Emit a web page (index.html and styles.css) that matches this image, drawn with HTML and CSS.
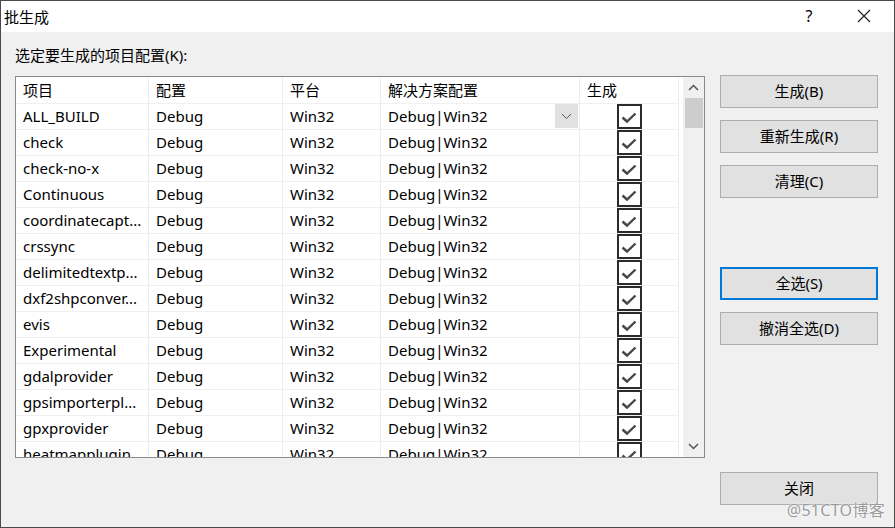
FILE: index.html
```html
<!DOCTYPE html>
<html lang="zh-CN">
<head>
<meta charset="utf-8">
<title>批生成</title>
<link rel="stylesheet" href="styles.css">
</head>
<body>
<div class="window">
  <div class="titlebar">
    <span class="title">批生成</span>
    <span class="tb-help">?</span>
    <span class="tb-close"><svg width="14" height="14" viewBox="0 0 14 14"><path d="M1 1 L13 13 M13 1 L1 13" stroke="#222" stroke-width="1.2" fill="none"/></svg></span>
  </div>
  <div class="main">
    <div class="left">
      <div class="label">选定要生成的项目配置(K):</div>
      <div class="listbox">
        <div class="grid">
          <div class="hdr">项目</div><div class="hdr">配置</div><div class="hdr">平台</div><div class="hdr">解决方案配置</div><div class="hdr">生成</div>

          <div class="c c1">ALL_BUILD</div><div class="c">Debug</div><div class="c">Win32</div><div class="c sol">Debug|Win32<span class="dd"><svg width="11" height="7" viewBox="0 0 11 7"><path d="M1 1 L5.5 5.5 L10 1" stroke="#555" stroke-width="1" fill="none"/></svg></span></div><div class="c chk"><span class="box"><svg width="20" height="20" viewBox="0 0 20 20"><path d="M3.5 10.5 L8 14.5 L16.5 6.5" stroke="#474747" stroke-width="2.4" fill="none"/></svg></span></div>

          <div class="c c1">check</div><div class="c">Debug</div><div class="c">Win32</div><div class="c">Debug|Win32</div><div class="c chk"><span class="box"><svg width="20" height="20" viewBox="0 0 20 20"><path d="M3.5 10.5 L8 14.5 L16.5 6.5" stroke="#474747" stroke-width="2.4" fill="none"/></svg></span></div>

          <div class="c c1">check-no-x</div><div class="c">Debug</div><div class="c">Win32</div><div class="c">Debug|Win32</div><div class="c chk"><span class="box"><svg width="20" height="20" viewBox="0 0 20 20"><path d="M3.5 10.5 L8 14.5 L16.5 6.5" stroke="#474747" stroke-width="2.4" fill="none"/></svg></span></div>

          <div class="c c1">Continuous</div><div class="c">Debug</div><div class="c">Win32</div><div class="c">Debug|Win32</div><div class="c chk"><span class="box"><svg width="20" height="20" viewBox="0 0 20 20"><path d="M3.5 10.5 L8 14.5 L16.5 6.5" stroke="#474747" stroke-width="2.4" fill="none"/></svg></span></div>

          <div class="c c1">coordinatecapt...</div><div class="c">Debug</div><div class="c">Win32</div><div class="c">Debug|Win32</div><div class="c chk"><span class="box"><svg width="20" height="20" viewBox="0 0 20 20"><path d="M3.5 10.5 L8 14.5 L16.5 6.5" stroke="#474747" stroke-width="2.4" fill="none"/></svg></span></div>

          <div class="c c1">crssync</div><div class="c">Debug</div><div class="c">Win32</div><div class="c">Debug|Win32</div><div class="c chk"><span class="box"><svg width="20" height="20" viewBox="0 0 20 20"><path d="M3.5 10.5 L8 14.5 L16.5 6.5" stroke="#474747" stroke-width="2.4" fill="none"/></svg></span></div>

          <div class="c c1">delimitedtextp...</div><div class="c">Debug</div><div class="c">Win32</div><div class="c">Debug|Win32</div><div class="c chk"><span class="box"><svg width="20" height="20" viewBox="0 0 20 20"><path d="M3.5 10.5 L8 14.5 L16.5 6.5" stroke="#474747" stroke-width="2.4" fill="none"/></svg></span></div>

          <div class="c c1">dxf2shpconver...</div><div class="c">Debug</div><div class="c">Win32</div><div class="c">Debug|Win32</div><div class="c chk"><span class="box"><svg width="20" height="20" viewBox="0 0 20 20"><path d="M3.5 10.5 L8 14.5 L16.5 6.5" stroke="#474747" stroke-width="2.4" fill="none"/></svg></span></div>

          <div class="c c1">evis</div><div class="c">Debug</div><div class="c">Win32</div><div class="c">Debug|Win32</div><div class="c chk"><span class="box"><svg width="20" height="20" viewBox="0 0 20 20"><path d="M3.5 10.5 L8 14.5 L16.5 6.5" stroke="#474747" stroke-width="2.4" fill="none"/></svg></span></div>

          <div class="c c1">Experimental</div><div class="c">Debug</div><div class="c">Win32</div><div class="c">Debug|Win32</div><div class="c chk"><span class="box"><svg width="20" height="20" viewBox="0 0 20 20"><path d="M3.5 10.5 L8 14.5 L16.5 6.5" stroke="#474747" stroke-width="2.4" fill="none"/></svg></span></div>

          <div class="c c1">gdalprovider</div><div class="c">Debug</div><div class="c">Win32</div><div class="c">Debug|Win32</div><div class="c chk"><span class="box"><svg width="20" height="20" viewBox="0 0 20 20"><path d="M3.5 10.5 L8 14.5 L16.5 6.5" stroke="#474747" stroke-width="2.4" fill="none"/></svg></span></div>

          <div class="c c1">gpsimporterpl...</div><div class="c">Debug</div><div class="c">Win32</div><div class="c">Debug|Win32</div><div class="c chk"><span class="box"><svg width="20" height="20" viewBox="0 0 20 20"><path d="M3.5 10.5 L8 14.5 L16.5 6.5" stroke="#474747" stroke-width="2.4" fill="none"/></svg></span></div>

          <div class="c c1">gpxprovider</div><div class="c">Debug</div><div class="c">Win32</div><div class="c">Debug|Win32</div><div class="c chk"><span class="box"><svg width="20" height="20" viewBox="0 0 20 20"><path d="M3.5 10.5 L8 14.5 L16.5 6.5" stroke="#474747" stroke-width="2.4" fill="none"/></svg></span></div>

          <div class="c c1">heatmapplugin</div><div class="c">Debug</div><div class="c">Win32</div><div class="c">Debug|Win32</div><div class="c chk"><span class="box"><svg width="20" height="20" viewBox="0 0 20 20"><path d="M3.5 10.5 L8 14.5 L16.5 6.5" stroke="#474747" stroke-width="2.4" fill="none"/></svg></span></div>
        </div>
        <div class="scrollbar">
          <span class="arrow"><svg width="11" height="7" viewBox="0 0 11 7"><path d="M1 6 L5.5 1.5 L10 6" stroke="#555" stroke-width="1.5" fill="none"/></svg></span>
          <span class="thumb"></span>
          <span class="track"></span>
          <span class="arrow"><svg width="11" height="7" viewBox="0 0 11 7"><path d="M1 1 L5.5 5.5 L10 1" stroke="#555" stroke-width="1.5" fill="none"/></svg></span>
        </div>
      </div>
    </div>
    <div class="buttons">
      <div class="btn">生成(B)</div>
      <div class="btn">重新生成(R)</div>
      <div class="btn">清理(C)</div>
      <div class="btn focus sep1">全选(S)</div>
      <div class="btn">撤消全选(D)</div>
      <div class="btn sep2">关闭</div>
    </div>
  </div>
  <div class="watermark">@51CTO博客</div>
</div>
</body>
</html>
```

FILE: styles.css
```css
* { box-sizing: border-box; }
html, body { margin: 0; padding: 0; }
body {
  font-family: "Noto Sans", "Noto Sans CJK SC", sans-serif;
  font-size: 15px;
  color: #000;
  background: #f0f0f0;
}
.window {
  position: relative;
  width: 895px;
  height: 528px;
  border: 1px solid #4a4a4a;
  background: #f0f0f0;
  display: flex;
  flex-direction: column;
  overflow: hidden;
}
.titlebar {
  height: 31px;
  background: #fff;
  display: flex;
  align-items: center;
  padding-left: 3px;
  padding-bottom: 1px;
  flex-shrink: 0;
}
.title { flex: 1; font-size: 15px; }
.tb-help { width: 20px; font-size: 16px; margin-right: 38px; text-align: center; }
.tb-close { width: 14px; height: 14px; margin-right: 23px; display: flex; }
.main {
  display: flex;
  padding: 13px 0 0 14px;
  flex: 1;
}
.left { width: 690px; display: flex; flex-direction: column; }
.label { height: 20px; line-height: 20px; margin-bottom: 11px; }
.listbox {
  height: 382px;
  border: 1px solid #8a8a8a;
  background: #fff;
  display: flex;
  overflow: hidden;
}
.grid {
  display: grid;
  grid-template-columns: 133px 134px 98px 199px 99px;
  grid-auto-rows: 26px;
  width: 667px;
  align-content: start;
}
.hdr, .c {
  padding-left: 7px;
  line-height: 26px;
  white-space: nowrap;
  overflow: hidden;
  border-right: 1px solid #ececec;
}
.hdr { height: 26px; }
.c { border-top: 1px solid #f0f0f0; line-height: 24px; }
.sol { position: relative; }
.dd {
  position: absolute;
  right: 1px;
  top: 0;
  width: 23px;
  height: 24px;
  background: #e1e1e1;
  display: flex;
  align-items: center;
  justify-content: center;
}
.chk {
  padding-left: 0;
  display: flex;
  justify-content: center;
  align-items: center;
}
.box {
  width: 25px;
  height: 25px;
  border: 2px solid #2b2b2b;
  display: flex;
  align-items: center;
  justify-content: center;
  background: #fff;
}
.scrollbar {
  width: 21px;
  background: #f0f0f0;
  display: flex;
  flex-direction: column;
  align-items: center;
}
.arrow { height: 21px; display: flex; align-items: center; justify-content: center; }
.thumb { width: 18px; height: 30px; background: #cdcdcd; }
.track { flex: 1; }
.buttons {
  margin-left: 15px;
  width: 158px;
  display: flex;
  flex-direction: column;
  padding-top: 30px;
}
.btn {
  height: 33px;
  border: 1px solid #adadad;
  background: #e1e1e1;
  display: flex;
  align-items: center;
  justify-content: center;
  padding-bottom: 2px;
  margin-bottom: 12px;
}
.btn.focus { border: 2px solid #0078d7; }
.sep1 { margin-top: 57px; }
.sep2 { margin-top: 115px; }
.watermark {
  position: absolute;
  right: 9px;
  bottom: 6px;
  font-size: 16px;
  color: #9a9a9a;
  text-shadow: 0 0 2px #fff, 0 0 1px #fff;
  letter-spacing: 0.3px;
}
```
